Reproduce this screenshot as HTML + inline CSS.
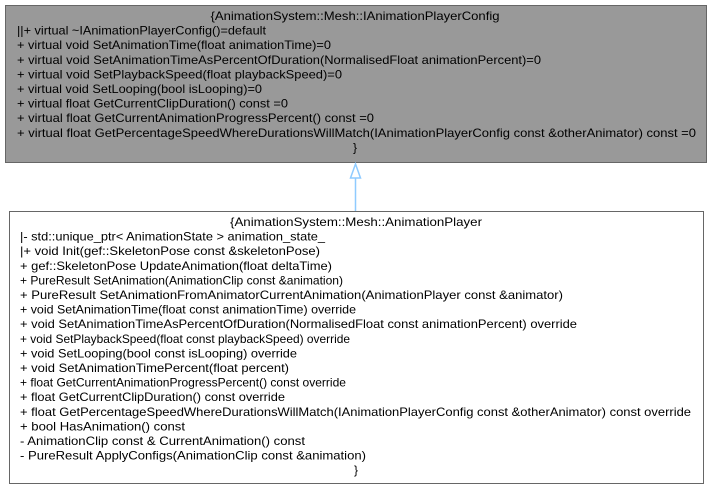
<!DOCTYPE html>
<html><head><meta charset="utf-8"><style>
html,body{margin:0;padding:0;background:#fff;width:712px;height:491px;overflow:hidden}
text{font-family:"Liberation Sans",Arial,sans-serif;font-size:12px;fill:#000}
</style></head><body>
<svg width="712" height="491" xmlns="http://www.w3.org/2000/svg">
<rect x="5.5" y="5.5" width="701" height="157" fill="#999999" stroke="#666666" stroke-width="1"/>
<g lengthAdjust="spacingAndGlyphs">
<text x="355" y="20" text-anchor="middle" textLength="289" lengthAdjust="spacingAndGlyphs">{AnimationSystem::Mesh::IAnimationPlayerConfig</text>
<text x="17" y="34.6" textLength="249" lengthAdjust="spacingAndGlyphs">||+ virtual ~IAnimationPlayerConfig()=default</text>
<text x="17" y="49.2" textLength="314" lengthAdjust="spacingAndGlyphs">+ virtual void SetAnimationTime(float animationTime)=0</text>
<text x="17" y="63.8" textLength="524" lengthAdjust="spacingAndGlyphs">+ virtual void SetAnimationTimeAsPercentOfDuration(NormalisedFloat animationPercent)=0</text>
<text x="17" y="78.4" textLength="325" lengthAdjust="spacingAndGlyphs">+ virtual void SetPlaybackSpeed(float playbackSpeed)=0</text>
<text x="17" y="93" textLength="245" lengthAdjust="spacingAndGlyphs">+ virtual void SetLooping(bool isLooping)=0</text>
<text x="17" y="107.6" textLength="271" lengthAdjust="spacingAndGlyphs">+ virtual float GetCurrentClipDuration() const =0</text>
<text x="17" y="122.2" textLength="357" lengthAdjust="spacingAndGlyphs">+ virtual float GetCurrentAnimationProgressPercent() const =0</text>
<text x="17" y="136.8" textLength="679" lengthAdjust="spacingAndGlyphs">+ virtual float GetPercentageSpeedWhereDurationsWillMatch(IAnimationPlayerConfig const &amp;otherAnimator) const =0</text>
<text x="355" y="151.4" text-anchor="middle">}</text>
</g>
<line x1="355.5" y1="178" x2="355.5" y2="211" stroke="#8fcbff" stroke-width="1.5"/>
<polygon points="355.5,164 350.5,178 360.5,178" fill="#fff" stroke="#8fcbff" stroke-width="1.5"/>
<rect x="9.5" y="211.5" width="694" height="272" fill="#fff" stroke="#666666" stroke-width="1"/>
<text x="356" y="226" text-anchor="middle" textLength="252" lengthAdjust="spacingAndGlyphs">{AnimationSystem::Mesh::AnimationPlayer</text>
<text x="20" y="240.6" textLength="305" lengthAdjust="spacingAndGlyphs">|- std::unique_ptr&lt; AnimationState &gt; animation_state_</text>
<text x="20" y="255.2" textLength="300" lengthAdjust="spacingAndGlyphs">|+ void Init(gef::SkeletonPose const &amp;skeletonPose)</text>
<text x="20" y="269.8" textLength="312" lengthAdjust="spacingAndGlyphs">+ gef::SkeletonPose UpdateAnimation(float deltaTime)</text>
<text x="20" y="284.4" textLength="323" lengthAdjust="spacingAndGlyphs">+ PureResult SetAnimation(AnimationClip const &amp;animation)</text>
<text x="20" y="299" textLength="543" lengthAdjust="spacingAndGlyphs">+ PureResult SetAnimationFromAnimatorCurrentAnimation(AnimationPlayer const &amp;animator)</text>
<text x="20" y="313.6" textLength="336" lengthAdjust="spacingAndGlyphs">+ void SetAnimationTime(float const animationTime) override</text>
<text x="20" y="328.2" textLength="557" lengthAdjust="spacingAndGlyphs">+ void SetAnimationTimeAsPercentOfDuration(NormalisedFloat const animationPercent) override</text>
<text x="20" y="342.8" textLength="330" lengthAdjust="spacingAndGlyphs">+ void SetPlaybackSpeed(float const playbackSpeed) override</text>
<text x="20" y="357.4" textLength="277" lengthAdjust="spacingAndGlyphs">+ void SetLooping(bool const isLooping) override</text>
<text x="20" y="372" textLength="269" lengthAdjust="spacingAndGlyphs">+ void SetAnimationTimePercent(float percent)</text>
<text x="20" y="386.6" textLength="326" lengthAdjust="spacingAndGlyphs">+ float GetCurrentAnimationProgressPercent() const override</text>
<text x="20" y="401.2" textLength="265" lengthAdjust="spacingAndGlyphs">+ float GetCurrentClipDuration() const override</text>
<text x="20" y="415.8" textLength="671" lengthAdjust="spacingAndGlyphs">+ float GetPercentageSpeedWhereDurationsWillMatch(IAnimationPlayerConfig const &amp;otherAnimator) const override</text>
<text x="20" y="430.4" textLength="165" lengthAdjust="spacingAndGlyphs">+ bool HasAnimation() const</text>
<text x="20" y="445" textLength="285" lengthAdjust="spacingAndGlyphs">- AnimationClip const &amp; CurrentAnimation() const</text>
<text x="20" y="459.6" textLength="346" lengthAdjust="spacingAndGlyphs">- PureResult ApplyConfigs(AnimationClip const &amp;animation)</text>
<text x="356" y="474.2" text-anchor="middle">}</text>
</svg>
</body></html>
